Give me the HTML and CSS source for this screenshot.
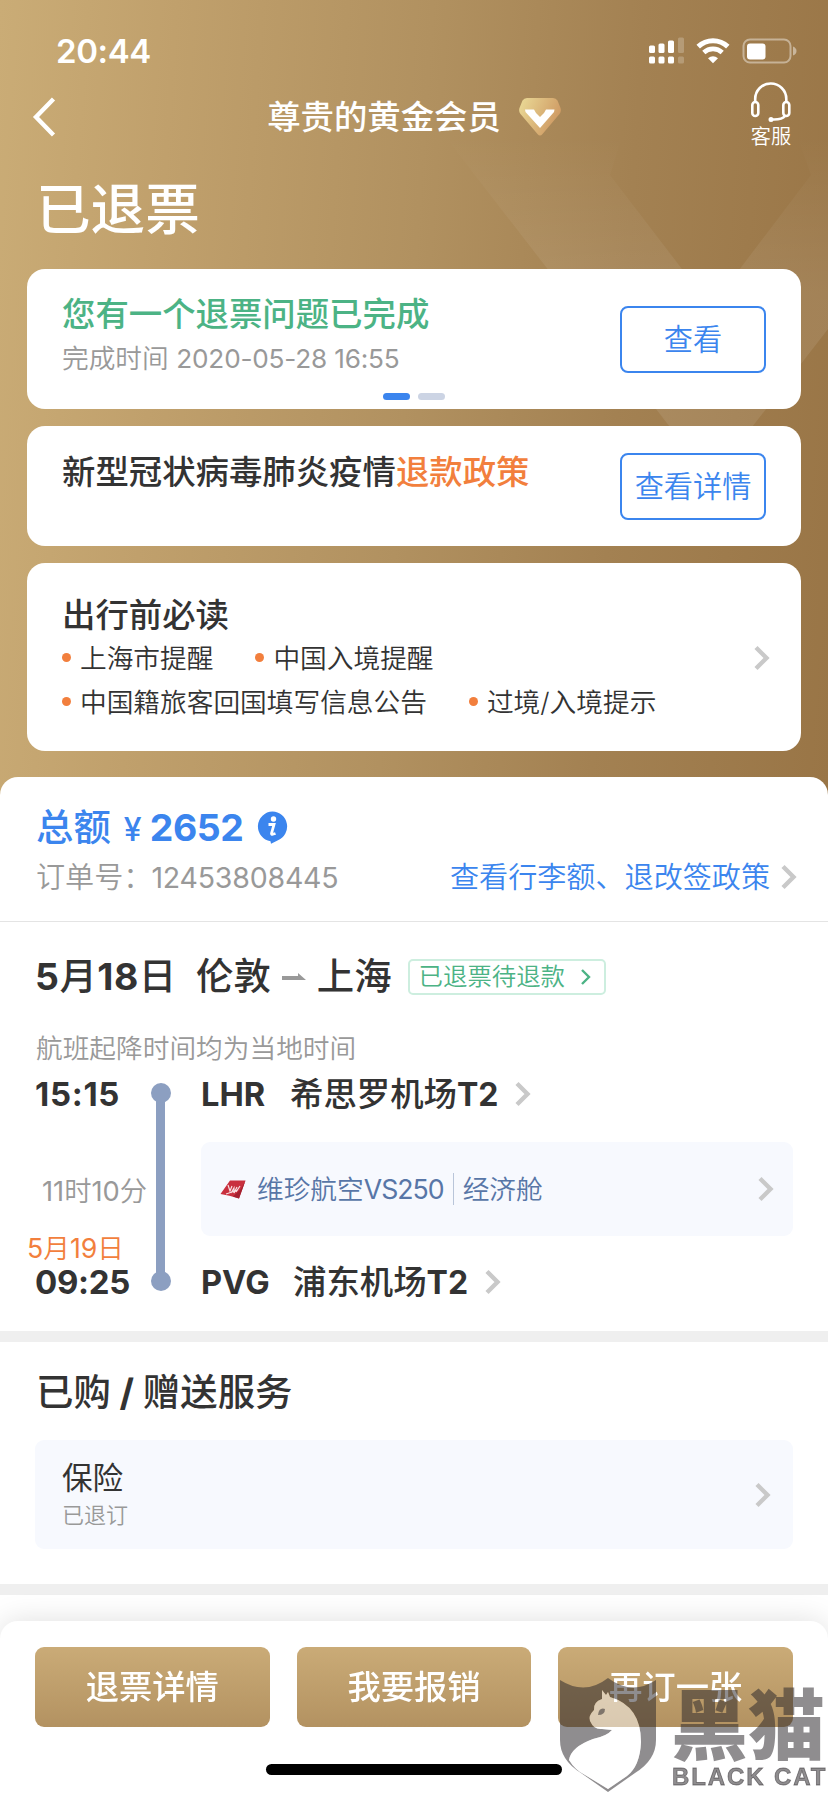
FILE: index.html
```html
<!DOCTYPE html>
<html lang="zh-CN">
<head>
    <meta charset="UTF-8">
    <meta name="viewport" content="width=device-width, initial-scale=1.0">
    <title>订单详情</title>
    <link rel="stylesheet" href="styles.css">
</head>
<body>

    <!-- Shared chevron -->
    <svg class="defs" width="0" height="0">
        <symbol id="chevron" viewBox="0 0 16 26">
            <path d="M2 2.5 L12.5 13 L2 23.5" fill="none" stroke="currentColor" stroke-width="4.4"/>
        </symbol>
    </svg>

    <header class="hero">
        <svg class="hero-bg" width="828" height="800" viewBox="0 0 828 800">
            <defs>
                <linearGradient id="fade" x1="0" y1="135" x2="0" y2="300" gradientUnits="userSpaceOnUse">
                    <stop offset="0" stop-color="#fff" stop-opacity="0"/>
                    <stop offset="1" stop-color="#fff" stop-opacity=".085"/>
                </linearGradient>
            </defs>
            <path fill="url(#fade)" d="M440 130 L711 480 L828 329 V130 H795 L811 175 L711 307 L610 175 L624 130 Z"/>
        </svg>

        <div class="status-bar">
            <span class="clock">20:44</span>
            <svg width="150" height="28" viewBox="0 0 150 28">
                <g fill="#fff">
                    <rect x="1" y="8.500" width="6" height="7.500" rx="1.500"/>
                    <rect x="10.500" y="6.500" width="6" height="9.500" rx="1.500"/>
                    <rect x="20" y="3.500" width="6" height="12.500" rx="1.500"/>
                    <rect x="1" y="19.500" width="6" height="7" rx="1.500"/>
                    <rect x="10.500" y="19.500" width="6" height="7" rx="1.500"/>
                    <rect x="20" y="19.500" width="6" height="7" rx="1.500"/>
                    <g opacity=".22">
                        <rect x="30" y="0.500" width="6" height="15.500" rx="1.500"/>
                        <rect x="30" y="19.500" width="6" height="7" rx="1.500"/>
                    </g>
                    <path d="M60 21.200 Q65 17.200 70 21.200 L65 26.300 Z"/>
                </g>
                <g fill="none" stroke="#fff">
                    <path d="M50.200 9.600 A21.500 21.500 0 0 1 79.800 9.600" stroke-width="5"/>
                    <path d="M55.800 15.500 A13.500 13.500 0 0 1 74.200 15.500" stroke-width="4.600"/>
                </g>
                <rect x="95.500" y="2.500" width="47" height="23" rx="6.500" fill="none" stroke="#fff" stroke-opacity=".42" stroke-width="2"/>
                <rect x="99" y="6.500" width="18.500" height="16" rx="3" fill="#fff"/>
                <path d="M145 9.500 Q148.500 11 148.500 14 Q148.500 17 145 18.500 Z" fill="#fff" fill-opacity=".45"/>
            </svg>
        </div>

        <div class="nav">
            <svg class="back" width="24" height="40" viewBox="0 0 24 40">
                <path d="M21.500 2 L4 20 L21.500 38" fill="none" stroke="#fff" stroke-width="4.400"/>
            </svg>
            <div class="nav-title">
                <span>尊贵的黄金会员</span>
                <svg width="42" height="38" viewBox="0 0 42 38">
                    <defs>
                        <linearGradient id="gem" x1="0" y1="0.200" x2="1" y2="0.600">
                            <stop offset="0" stop-color="#e9d794"/>
                            <stop offset="1" stop-color="#cd9660"/>
                        </linearGradient>
                    </defs>
                    <path fill="url(#gem)" d="M8 0 H34 Q37 0 38.500 2.500 L41.300 9.500 Q42.800 13 40.500 16 L23.500 36 Q21 39 18.500 36 L1.500 16 Q-0.800 13 0.700 9.500 L3.500 2.500 Q5 0 8 0 Z"/>
                    <path fill="#fff" d="M6 11.500 H15 L17 15 L21 19 L25 15 L27 11.500 H35.500 L35 14 L21 30 L6.500 14 Z"/>
                </svg>
            </div>
            <div class="service">
                <svg width="42" height="41" viewBox="0 0 42 41" fill="none" stroke="#fff" stroke-width="2.600">
                    <path d="M5.200 20 V17 A15.300 15.300 0 0 1 36.300 17 V20"/>
                    <rect x="2.300" y="20" width="6" height="14" rx="3"/>
                    <rect x="33.300" y="20" width="6" height="14" rx="3"/>
                    <path d="M35 34 Q32 38 22 37.500"/>
                    <circle cx="21" cy="37.500" r="1.500" fill="#fff" stroke-width="2"/>
                </svg>
                <span>客服</span>
            </div>
        </div>

        <h1 class="order-status">已退票</h1>

        <section class="card card-refund">
            <div class="card-text">
                <h2 class="green">您有一个退票问题已完成</h2>
                <p>完成时间 <span class="stamp">2020-05-28 16:55</span></p>
            </div>
            <button class="outline-btn">查看</button>
            <div class="pager"><i class="on"></i><i></i></div>
        </section>

        <section class="card card-policy">
            <div class="card-text">
                <h2>新型冠状病毒肺炎疫情<em>退款政策</em></h2>
            </div>
            <button class="outline-btn">查看详情</button>
        </section>

        <section class="card card-notice">
            <div class="card-text">
                <h2>出行前必读</h2>
                <ul><li>上海市提醒</li><li>中国入境提醒</li></ul>
                <ul><li>中国籍旅客回国填写信息公告</li><li>过境/入境提示</li></ul>
            </div>
            <svg class="chevron"><use href="#chevron"/></svg>
        </section>
    </header>

    <main class="sheet">
        <section class="summary">
            <div class="total">
                <span>总额</span>
                <span class="yen">¥</span>
                <span class="amount">2652</span>
                <svg width="31" height="33" viewBox="0 0 31 33">
                    <path fill="#3b85ee" d="M15.500 0.500 A15 15 0 0 1 21 29.300 L14 32.800 L13.500 30.300 A15 15 0 0 1 15.500 0.500 Z"/>
                    <circle cx="16.500" cy="8" r="2.700" fill="#fff"/>
                    <path d="M11.500 13.500 H17 L14.500 22.500 Q14.300 24 18.500 22.500" fill="none" stroke="#fff" stroke-width="2.800"/>
                </svg>
            </div>
            <div class="order-line">
                <span class="order-label">订单号：</span>
                <span class="order-no">12453808445</span>
                <a class="policy-link">查看行李额、退改签政策</a>
                <svg class="chevron"><use href="#chevron"/></svg>
            </div>
        </section>

        <section class="flight">
            <div class="route">
                <span class="date"><b>5</b>月<b>18</b>日</span>
                <span class="city">伦敦</span>
                <svg class="arrow" width="24" height="8" viewBox="0 0 24 8">
                    <path fill="#999" d="M0 3 H16 V0 L24 7 H0 Z"/>
                </svg>
                <span class="city">上海</span>
                <span class="tag"><span>已退票待退款</span>
                    <svg width="10" height="16" viewBox="0 0 10 16"><path d="M1 1 L8 8 L1 15" fill="none" stroke="#4cb385" stroke-width="2.400"/></svg>
                </span>
            </div>
            <p class="local-note">航班起降时间均为当地时间</p>

            <div class="timeline">
                <div class="times">
                    <span class="time depart">15:15</span>
                    <span class="duration"><span class="num">11</span>时<span class="num">10</span>分</span>
                    <span class="next-day"><span class="num">5</span>月<span class="num">19</span>日</span>
                    <span class="time">09:25</span>
                </div>
                <div class="track"></div>
                <div class="stops">
                    <div class="stop">
                        <span class="code">LHR</span>
                        <span class="airport lhr">希思罗机场<b>T2</b></span>
                        <svg class="chevron"><use href="#chevron"/></svg>
                    </div>
                    <div class="plane-box">
                        <svg width="26" height="19" viewBox="0 0 26 19">
                            <path fill="#c9303e" d="M10 0.500 H25.500 L19 18.500 Q9 15 0.500 14 Z"/>
                            <path fill="#a3202f" d="M19 18.500 L25.500 0.500 L21 9 L13 16.500 Z"/>
                            <path d="M8 5 L10 11 L12 6 M11 13 L14 8 L14 13 L17 7 M16 12 L20 6 M6 14 L18 10" fill="none" stroke="#f7dfe1" stroke-width="1.200"/>
                        </svg>
                        <span class="flight-no">维珍航空<span class="num">VS250</span></span>
                        <span class="cabin">经济舱</span>
                        <svg class="chevron"><use href="#chevron"/></svg>
                    </div>
                    <div class="stop">
                        <span class="code">PVG</span>
                        <span class="airport pvg">浦东机场<b>T2</b></span>
                        <svg class="chevron"><use href="#chevron"/></svg>
                    </div>
                </div>
            </div>
        </section>

        <section class="extras">
            <h2>已购 <b>/</b> 赠送服务</h2>
            <div class="extra-box">
                <div>
                    <h3>保险</h3>
                    <p>已退订</p>
                </div>
                <svg class="chevron"><use href="#chevron"/></svg>
            </div>
        </section>
    </main>

    <footer class="actions">
        <div class="buttons">
            <button>退票详情</button>
            <button>我要报销</button>
            <button>再订一张</button>
        </div>
        <div class="home-bar"></div>
    </footer>

    <!-- Black Cat watermark -->
    <div class="watermark">
        <svg width="98" height="116" viewBox="0 0 98 116">
            <path class="shield" fill-rule="evenodd" d="M1 2 Q26 18 49 0 Q73 18 97 2 V62 Q97 82 76 95 L49 114 L22 95 Q1 82 1 62 Z M43 12 L43 21 Q34 24 35 32 Q29 38 31 43 Q35 52 43 51 L53 52 Q48 58 34 61 Q12 69 10 82 Q16 92 26 97 L49 111 L68 98 Q81 88 82 64 Q82 28 51 19 L49 14 L47 17 Z"/>
            <path class="cat" d="M43 12 L43 21 Q34 24 35 32 Q29 38 31 43 Q35 52 43 51 L53 52 Q48 58 34 61 Q12 69 10 82 Q16 92 26 97 L49 111 L68 98 Q81 88 82 64 Q82 28 51 19 L49 14 L47 17 Z"/>
            <path class="shield" d="M39 37 Q40 29 46 31 Q46 37 39 37 Z"/>
        </svg>
        <div class="wm-text">
            <span class="wm-cn">黑猫</span>
            <span class="wm-en">BLACK CAT</span>
        </div>
    </div>

</body>
</html>
```
FILE: styles.css
```css
* {
    box-sizing: border-box;
}

body {
    margin: 0;
    width: 828px;
    height: 1793px;
    overflow: hidden;
    background: #fff;
    color: #333;
    font-family: Inter, "Noto Sans CJK SC", sans-serif;
}

h1, h2, h3, p, ul {
    margin: 0;
    padding: 0;
    font-weight: 500;
}

b {
    font-weight: 700;
}

svg {
    display: block;
    flex-shrink: 0;
}

button {
    font-family: inherit;
    padding: 0 0 4px;
}

.defs {
    position: absolute;
}

.chevron {
    width: 16px;
    height: 26px;
    color: #c9c9c9;
}

/* Header */
.hero {
    position: relative;
    height: 800px;
    background: linear-gradient(94deg, #caac76 0%, #c0a06c 20%, #b19160 49%, #a38152 73%, #997546 100%);
    color: #fff;
}

.hero-bg {
    position: absolute;
    top: 0;
    left: 0;
}

.status-bar {
    position: relative;
    display: flex;
    justify-content: space-between;
    height: 78px;
    padding: 37px 30px 0 56px;
}

.clock {
    font-size: 33px;
    font-weight: 600;
    line-height: 28px;
    letter-spacing: -0.400px;
}

.nav {
    position: relative;
    display: flex;
    justify-content: space-between;
    height: 78px;
    padding: 0 36px 0 32px;
}

.back {
    margin-top: 19px;
}

.nav-title {
    display: flex;
    align-items: center;
    gap: 18px;
    height: 78px;
    margin-left: 22px;
    font-size: 33.400px;
    font-weight: 500;
}

.nav-title span {
    padding-bottom: 5px;
}

.service {
    display: flex;
    flex-direction: column;
    align-items: center;
    padding-top: 4px;
    font-size: 20.200px;
    font-weight: 350;
    line-height: 28px;
}

.order-status {
    position: relative;
    height: 113px;
    padding-left: 36px;
    font-size: 54.600px;
    line-height: 107px;
}

/* Cards */
.card {
    position: relative;
    display: flex;
    justify-content: space-between;
    align-items: center;
    margin: 0 27px 17px;
    padding: 0 35px;
    border-radius: 18px;
    background: #fff;
    color: #333;
}

.card h2 {
    font-size: 33.400px;
    line-height: 44px;
}

.card em {
    font-style: normal;
    color: #f27f3d;
}

.card .green {
    color: #4cb385;
}

.card p {
    font-size: 26.700px;
    font-weight: 350;
    line-height: 44px;
    color: #999;
}

.stamp {
    font-size: 26.200px;
    font-weight: 400;
    letter-spacing: -0.200px;
}

.card-refund {
    height: 140px;
}

.card-refund .card-text {
    padding-bottom: 6px;
}

.card-policy {
    height: 120px;
}

.card-policy .card-text {
    height: 73px;
}

.card-notice {
    height: 188px;
    padding-right: 31px;
}

.card-notice .card-text,
.card-notice .chevron {
    margin-top: 2px;
}

.card-notice h2 {
    height: 43px;
}

.outline-btn {
    width: 146px;
    height: 67px;
    border: 2px solid #3b85ee;
    border-radius: 8px;
    background: #fff;
    color: #3b85ee;
    font-size: 29.200px;
    font-weight: 350;
}

.pager {
    position: absolute;
    left: 356px;
    bottom: 9px;
    display: flex;
    gap: 8px;
}

.pager i {
    width: 27px;
    height: 7px;
    border-radius: 4px;
    background: #ccd4e4;
}

.pager .on {
    background: #3b85ee;
}

.card-notice ul {
    display: flex;
    gap: 42px;
    list-style: none;
    font-size: 26.700px;
    line-height: 44px;
}

.card-notice li {
    display: flex;
    align-items: center;
    gap: 9px;
    font-weight: 350;
}

.card-notice li::before {
    content: "";
    width: 9px;
    height: 9px;
    border-radius: 50%;
    background: #f27f3d;
}

/* Order sheet */
.sheet {
    position: relative;
    margin-top: -23px;
    border-radius: 18px 18px 0 0;
    background: #fff;
}

.summary {
    height: 145px;
    padding: 25px 31px 0 36px;
    border-bottom: 1px solid #e4e4e4;
}

.total {
    display: flex;
    align-items: center;
    height: 50px;
    color: #3b85ee;
    font-size: 37.400px;
    font-weight: 500;
}

.total span:first-child {
    padding-bottom: 5px;
}

.yen {
    width: 26px;
    margin-left: 13px;
    padding-top: 4px;
    font-size: 32px;
    font-weight: 500;
}

.amount {
    margin-right: 14px;
    font-weight: 700;
    letter-spacing: -0.400px;
}

.order-line {
    display: flex;
    align-items: center;
    height: 50px;
    font-size: 29.100px;
    font-weight: 350;
    color: #999;
}

.order-label,
.policy-link {
    padding-bottom: 4px;
}

.order-no {
    margin-left: -1px;
    font-size: 28.500px;
    font-weight: 400;
    letter-spacing: -0.200px;
}

.policy-link {
    margin-left: auto;
    margin-right: 11px;
    color: #3b85ee;
}

.flight {
    height: 409px;
    padding: 30px 35px 0;
}

.route {
    display: flex;
    align-items: center;
    height: 50px;
    font-size: 37.400px;
    font-weight: 500;
}

.date,
.city {
    padding-bottom: 7px;
}

.date {
    width: 161px;
    letter-spacing: 0.500px;
    white-space: nowrap;
}

.arrow {
    margin: 0 11px 0 11px;
}

.tag {
    display: flex;
    align-items: center;
    gap: 16px;
    width: 198px;
    height: 36px;
    margin-left: 16px;
    padding-left: 9px;
    border: 2px solid #cdeedf;
    border-radius: 5px;
    color: #4cb385;
    font-size: 24.400px;
    font-weight: 350;
}

.tag span {
    padding-bottom: 5px;
}

.local-note {
    height: 44px;
    margin: 24px 0 0 1px;
    font-size: 26.700px;
    font-weight: 350;
    line-height: 44px;
    color: #999;
}

.timeline {
    display: flex;
    height: 212px;
    margin-top: 4px;
}

.times {
    display: flex;
    flex-direction: column;
    width: 116px;
    line-height: 40px;
}

.time {
    font-size: 33px;
    font-weight: 700;
    letter-spacing: -0.300px;
    white-space: nowrap;
}

.depart {
    letter-spacing: 0.700px;
}

.num {
    font-weight: 400;
}

.duration {
    margin: 58px 0 17px 7px;
    font-size: 27.300px;
    font-weight: 350;
    color: #999;
    white-space: nowrap;
}

.next-day {
    margin: -1px 0 -6px -8px;
    font-size: 26.700px;
    font-weight: 350;
    color: #f27f3d;
}

/* Vertical bar with a dot at each end */
.track {
    position: relative;
    width: 9px;
    height: 190px;
    margin: 18px 0 0 5px;
    background: #8c9fc1;
}

.track::before,
.track::after {
    content: "";
    position: absolute;
    left: -5.500px;
    width: 20px;
    height: 20px;
    border-radius: 50%;
    background: #8c9fc1;
}

.track::before {
    top: -9px;
}

.track::after {
    bottom: -9px;
}

.stops {
    flex: 1;
    margin-left: 36px;
}

.stop {
    display: flex;
    align-items: center;
    height: 40px;
    font-size: 33.400px;
    font-weight: 500;
}

.stop .chevron {
    margin-left: 17px;
}

.code {
    width: 89px;
    font-size: 32.600px;
    font-weight: 700;
}

.airport {
    padding-bottom: 6px;
}

.airport b {
    font-size: 32px;
}

.pvg {
    margin-left: 3px;
}

.plane-box {
    display: flex;
    align-items: center;
    height: 94px;
    margin: 28px 0 26px;
    padding: 0 19px 0 19px;
    border-radius: 9px;
    background: #f7f9fe;
    color: #5876a7;
    font-size: 26.700px;
    font-weight: 350;
}

.flight-no {
    margin-left: 11px;
    padding-bottom: 3px;
}

.flight-no .num {
    letter-spacing: -1px;
}

.cabin {
    margin-left: 9px;
    padding-left: 9px;
    border-left: 1px solid #b9c5d9;
    line-height: 32px;
}

.plane-box .chevron,
.extra-box .chevron {
    margin-left: auto;
}

.extras {
    height: 264px;
    padding: 26px 35px 0 36px;
    border-top: 11px solid #efefef;
    border-bottom: 11px solid #efefef;
}

.extras h2 {
    height: 50px;
    font-size: 37.400px;
    line-height: 50px;
    word-spacing: -1.200px;
}

.extra-box {
    display: flex;
    align-items: center;
    height: 109px;
    margin: 22px 0 0 -1px;
    padding: 0 22px 0 27px;
    border-radius: 9px;
    background: #f7f9fe;
}

.extra-box h3 {
    font-size: 30.600px;
    font-weight: 400;
    line-height: 40px;
}

.extra-box p {
    font-size: 22px;
    font-weight: 350;
    line-height: 34px;
    color: #999;
}

/* Bottom bar */
.actions {
    position: fixed;
    left: 0;
    bottom: 0;
    width: 828px;
    height: 172px;
    padding: 26px 35px 0;
    border-radius: 18px 18px 0 0;
    background: #fff;
    box-shadow: 0 0 30px rgba(0, 0, 0, 0.13);
}

.buttons {
    display: grid;
    grid-template-columns: repeat(3, 1fr);
    gap: 27px;
}

.buttons button {
    height: 80px;
    padding-bottom: 6px;
    border: none;
    border-radius: 9px;
    background: linear-gradient(#caab77, #b39261);
    color: #fff;
    font-size: 33.300px;
    font-weight: 500;
}

.home-bar {
    width: 296px;
    height: 11px;
    margin: 37px auto 0;
    border-radius: 6px;
    background: #000;
}

.watermark {
    position: fixed;
    left: 559px;
    top: 1678px;
    display: flex;
    gap: 14px;
    color: rgba(44, 40, 43, 0.53);
}

.shield {
    fill: rgba(44, 40, 43, 0.53);
}

.cat {
    fill: rgba(255, 255, 255, 0.5);
}

.wm-text {
    display: flex;
    flex-direction: column;
    white-space: nowrap;
}

.wm-cn {
    height: 82px;
    font-family: "Noto Sans CJK SC", sans-serif;
    font-size: 77px;
    font-weight: 900;
    line-height: 85px;
}

.wm-en {
    margin-left: 1px;
    font-family: "Liberation Sans", sans-serif;
    font-size: 24px;
    font-weight: 700;
    line-height: 34px;
    letter-spacing: 1.900px;
    -webkit-text-stroke: 0.800px rgba(44, 40, 43, 0.53);
}
```
